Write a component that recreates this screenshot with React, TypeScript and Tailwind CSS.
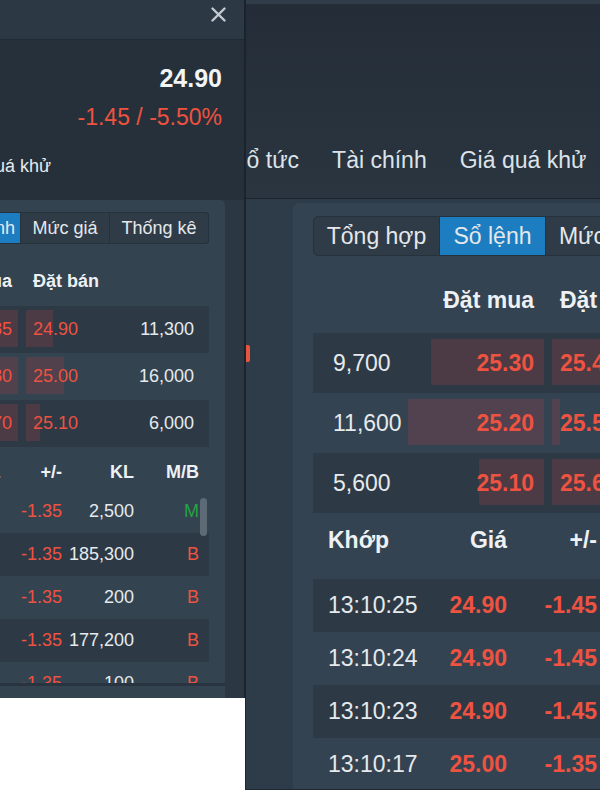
import React from 'react';

const RED = 'text-[#ee5240]';

type OrderRow = { bidVol: string; bid: string; bidBar: number; ask: string; askBar: number; askVol: string };

const leftOrders: OrderRow[] = [
  { bidVol: '8,200', bid: '24.85', bidBar: 44, ask: '24.90', askBar: 27, askVol: '11,300' },
  { bidVol: '14,100', bid: '24.80', bidBar: 52, ask: '25.00', askBar: 38, askVol: '16,000' },
  { bidVol: '9,900', bid: '24.70', bidBar: 46, ask: '25.10', askBar: 14, askVol: '6,000' },
];

const leftTrades = [
  { time: '13:10:17', price: '25.00', chg: '-1.35', vol: '2,500', side: 'M' },
  { time: '13:10:15', price: '25.00', chg: '-1.35', vol: '185,300', side: 'B' },
  { time: '13:10:12', price: '25.00', chg: '-1.35', vol: '200', side: 'B' },
  { time: '13:10:09', price: '25.00', chg: '-1.35', vol: '177,200', side: 'B' },
  { time: '13:10:05', price: '25.00', chg: '-1.35', vol: '100', side: 'B' },
];

const rightOrders: OrderRow[] = [
  { bidVol: '9,700', bid: '25.30', bidBar: 113, ask: '25.40', askBar: 120, askVol: '12,400' },
  { bidVol: '11,600', bid: '25.20', bidBar: 136, ask: '25.50', askBar: 8, askVol: '3,100' },
  { bidVol: '5,600', bid: '25.10', bidBar: 65, ask: '25.60', askBar: 120, askVol: '10,800' },
];

const rightTrades = [
  { time: '13:10:25', price: '24.90', chg: '-1.45' },
  { time: '13:10:24', price: '24.90', chg: '-1.45' },
  { time: '13:10:23', price: '24.90', chg: '-1.45' },
  { time: '13:10:17', price: '25.00', chg: '-1.35' },
];

const LeftPanel: React.FC = () => (
  <div className="w-[245px] h-[698px] shrink-0 flex flex-col bg-[#25303a] border-r border-[#1a232b] overflow-hidden">
    {/* title bar */}
    <div className="h-[40px] shrink-0 flex justify-end pt-[7px] pr-[18px] bg-[#2c3945] border-b border-[#212b34]">
      <svg width="15" height="15" viewBox="0 0 15 15" className="text-[#c3c9cf]">
        <path d="M1.5 1.5 13.5 13.5 M13.5 1.5 1.5 13.5" stroke="currentColor" strokeWidth="2.4" strokeLinecap="round" />
      </svg>
    </div>

    <div className="pr-[22px] text-right">
      <div className="mt-[23px] h-[30px] leading-[30px] text-[25px] font-bold text-[#f2f4f6]">24.90</div>
      <div className={`mt-[10px] h-[28px] leading-[28px] text-[23px] ${RED}`}>-1.45 / -5.50%</div>
    </div>

    <div className="mt-[23px] h-[24px] leading-[24px] text-[18px] text-[#e6eaed] whitespace-nowrap ml-[-48px]">
      Giá quá khử
    </div>

    <div className="mt-[22px] flex-1 flex bg-[#2b3844]">
      <div className="w-[225px] shrink-0 flex flex-col bg-[#334350] rounded-tr-[5px] overflow-hidden">
        {/* tabs */}
        <div className="mt-[12px] flex ml-[-149px] text-[18px] text-[#e4e8eb] whitespace-nowrap">
          <div className="w-[98px] h-[32px] leading-[30px] text-center border border-[#25313b] rounded-l-[4px] bg-[#2f3c48]">Tổng hợp</div>
          <div className="w-[72px] h-[32px] leading-[30px] text-center border-y border-r border-[#25313b] bg-[#1d7dc1]">Sổ lệnh</div>
          <div className="w-[89px] h-[32px] leading-[30px] text-center border-y border-r border-[#25313b] bg-[#2f3c48]">Mức giá</div>
          <div className="w-[99px] h-[32px] leading-[30px] text-center border-y border-r border-[#25313b] rounded-r-[4px] bg-[#2f3c48]">Thống kê</div>
        </div>

        {/* order book header */}
        <div className="h-[62px] shrink-0 pt-[25px] flex ml-[-142px] w-[351px] text-[18px] font-bold text-[#eef1f3] leading-[24px] whitespace-nowrap">
          <div className="w-[80px]" />
          <div className="w-[80px] text-right pr-[6px]">Đặt mua</div>
          <div className="w-[80px] ml-[8px] pl-[7px]">Đặt bán</div>
          <div className="w-[103px]" />
        </div>

        {leftOrders.map((r, i) => (
          <div
            key={r.ask}
            className={`h-[47px] shrink-0 flex items-center ml-[-142px] w-[351px] text-[18px] whitespace-nowrap ${i % 2 === 0 ? 'bg-[#2d3a46]' : ''}`}
          >
            <div className="w-[80px] text-[#e6eaed]">{r.bidVol}</div>
            <div className="relative w-[80px] h-full flex items-center justify-end pr-[6px]">
              <div className="absolute right-0 top-[4px] bottom-[6px] bg-[#dc3c3c2e]" style={{ width: r.bidBar }} />
              <span className={`relative ${RED}`}>{r.bid}</span>
            </div>
            <div className="relative w-[80px] ml-[8px] h-full flex items-center pl-[7px]">
              <div className="absolute left-0 top-[4px] bottom-[6px] bg-[#dc3c3c2e]" style={{ width: r.askBar }} />
              <span className={`relative ${RED}`}>{r.ask}</span>
            </div>
            <div className="w-[103px] text-right pr-[15px] text-[#e6eaed]">{r.askVol}</div>
          </div>
        ))}

        {/* trades header */}
        <div className="h-[43px] shrink-0 pt-[13px] flex ml-[-120px] w-[329px] text-[18px] font-bold text-[#eef1f3] leading-[24px] whitespace-nowrap">
          <div className="w-[60px]">Khớp</div>
          <div className="w-[60px] text-right">Giá</div>
          <div className="w-[62px] text-right">+/-</div>
          <div className="w-[72px] text-right">KL</div>
          <div className="w-[75px] text-right pr-[10px]">M/B</div>
        </div>

        <div className="relative h-[193px] shrink-0 overflow-hidden">
          {leftTrades.map((t, i) => (
            <div
              key={i}
              className={`h-[43px] flex items-center ml-[-120px] w-[329px] text-[18px] whitespace-nowrap ${i % 2 === 1 ? 'bg-[#2d3a46]' : ''}`}
            >
              <div className="w-[60px] text-[#e6eaed]">{t.time}</div>
              <div className={`w-[60px] text-right ${RED}`}>{t.price}</div>
              <div className={`w-[62px] text-right ${RED}`}>{t.chg}</div>
              <div className="w-[72px] text-right text-[#e6eaed]">{t.vol}</div>
              <div className={`w-[75px] text-right pr-[10px] ${t.side === 'M' ? 'text-[#25a243]' : RED}`}>{t.side}</div>
            </div>
          ))}
          <div className="absolute left-[200px] top-[8px] w-[7px] h-[38px] rounded-full bg-[#5d6b77]" />
        </div>
        <div className="h-[3px] shrink-0 bg-[#28343f]" />
      </div>
    </div>
  </div>
);

const RightPanel: React.FC = () => (
  <div className="flex-1 h-[790px] flex flex-col border-l border-[#1c252e] border-b border-b-[#1f2830] overflow-hidden">
    <div className="h-[4px] shrink-0 bg-[#303c47]" />
    <div className="h-[195px] shrink-0 pt-[141px] bg-gradient-to-b from-[#242d37] to-[#2a3540] border-b border-[#1c252e]">
      <div className="flex gap-[33px] ml-[-16px] h-[30px] leading-[30px] text-[23px] text-[#dde3e8] whitespace-nowrap">
        <span>Cổ tức</span>
        <span>Tài chính</span>
        <span>Giá quá khử</span>
      </div>
    </div>

    <div className="flex-1 flex bg-[#2e3b48]">
      <div className="w-[47px] shrink-0 flex flex-col">
        <div className="mt-[146px] w-[4px] h-[17px] rounded-r-[2px] bg-[#e8553f]" />
      </div>

      <div className="flex-1 mt-[4px] pl-[20px] flex flex-col bg-[#344352] rounded-tl-[6px] overflow-hidden">
        {/* tabs */}
        <div className="mt-[13px] flex text-[23px] text-[#e4e8eb] whitespace-nowrap">
          <div className="w-[127px] shrink-0 h-[40px] leading-[38px] text-center border border-[#25313b] rounded-l-[5px] bg-[#2f3c48]">Tổng hợp</div>
          <div className="w-[106px] shrink-0 h-[40px] leading-[38px] text-center border-y border-r border-[#25313b] bg-[#1d7dc1]">Sổ lệnh</div>
          <div className="w-[110px] shrink-0 h-[40px] leading-[38px] text-center border-y border-r border-[#25313b] bg-[#2f3c48]">Mức giá</div>
          <div className="w-[120px] shrink-0 h-[40px] leading-[38px] text-center border-y border-r border-[#25313b] rounded-r-[5px] bg-[#2f3c48]">Thống kê</div>
        </div>

        {/* order book header */}
        <div className="h-[77px] shrink-0 pt-[29px] flex text-[23px] font-bold text-[#eef1f3] leading-[30px] whitespace-nowrap">
          <div className="w-[92px] shrink-0" />
          <div className="w-[139px] shrink-0 text-right pr-[10px]">Đặt mua</div>
          <div className="w-[139px] shrink-0 ml-[8px] pl-[8px]">Đặt bán</div>
        </div>

        {rightOrders.map((r, i) => (
          <div
            key={r.bid}
            className={`h-[60px] shrink-0 flex items-center text-[23px] whitespace-nowrap ${i % 2 === 0 ? 'bg-[#2d3a46]' : ''}`}
          >
            <div className="w-[92px] shrink-0 pl-[20px] text-[#e6eaed]">{r.bidVol}</div>
            <div className="relative w-[139px] shrink-0 h-full flex items-center justify-end pr-[10px]">
              <div className="absolute right-0 top-[6px] bottom-[8px] bg-[#dc3c3c2e]" style={{ width: r.bidBar }} />
              <span className={`relative font-bold ${RED}`}>{r.bid}</span>
            </div>
            <div className="relative w-[139px] shrink-0 ml-[8px] h-full flex items-center pl-[8px]">
              <div className="absolute left-0 top-[6px] bottom-[8px] bg-[#dc3c3c2e]" style={{ width: r.askBar }} />
              <span className={`relative font-bold ${RED}`}>{r.ask}</span>
            </div>
            <div className="w-[110px] shrink-0 text-right pr-[15px] text-[#e6eaed]">{r.askVol}</div>
          </div>
        ))}

        {/* trades header */}
        <div className="h-[66px] shrink-0 pt-[12px] flex text-[23px] font-bold text-[#eef1f3] leading-[30px] whitespace-nowrap">
          <div className="w-[130px] shrink-0 pl-[15px]">Khớp</div>
          <div className="w-[64px] shrink-0 text-right">Giá</div>
          <div className="w-[90px] shrink-0 text-right">+/-</div>
          <div className="w-[100px] shrink-0 text-right">KL</div>
        </div>

        {rightTrades.map((t, i) => (
          <div
            key={t.time}
            className={`h-[53px] shrink-0 flex items-center text-[23px] whitespace-nowrap ${i % 2 === 0 ? 'bg-[#2d3a46]' : ''}`}
          >
            <div className="w-[130px] shrink-0 pl-[15px] text-[#e6eaed]">{t.time}</div>
            <div className={`w-[64px] shrink-0 text-right font-bold ${RED}`}>{t.price}</div>
            <div className={`w-[90px] shrink-0 text-right font-bold ${RED}`}>{t.chg}</div>
            <div className="w-[100px] shrink-0 text-right text-[#e6eaed]">2,500</div>
          </div>
        ))}
      </div>
    </div>
  </div>
);

const App: React.FC = () => (
  <div className="w-[600px] h-[800px] flex items-start bg-white overflow-hidden font-['Liberation_Sans',Arial,sans-serif]">
    <LeftPanel />
    <RightPanel />
  </div>
);

export default App;
